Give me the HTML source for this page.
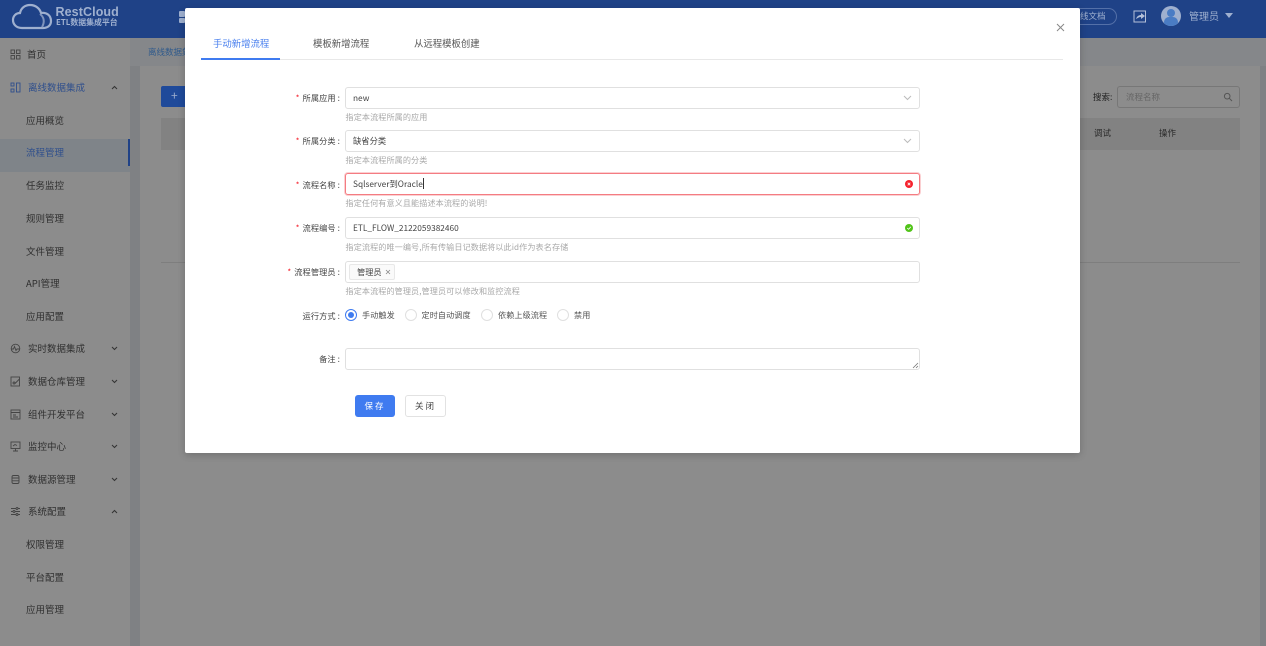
<!DOCTYPE html>
<html><head><meta charset="utf-8"><style>
*{box-sizing:border-box}
html,body{margin:0;padding:0;width:1266px;height:646px;overflow:hidden;background:#7f8184;font-family:"Noto Sans CJK SC","Liberation Sans",sans-serif;font-size:9.5px;color:#333}
#wrap{position:absolute;left:0;top:0;width:1266px;height:646px;filter:blur(.35px)}
.a{position:absolute;white-space:nowrap}
#hdr{left:0;top:0;width:1266px;height:38px;background:#1f4287}
#side{left:0;top:38px;width:130px;height:608px;background:#8c8c8c}
#main{left:140px;top:66px;width:1120px;height:580px;background:#8c8c8c}
.m{position:absolute;left:28px;font-size:9.5px;color:#2f2f2f;line-height:14px;letter-spacing:0;margin-top:-.5px}
.s{left:26px}
.ic{position:absolute;left:10px;width:11px;height:11px}
.ch{position:absolute;left:111px;width:7px;height:5px;margin-top:1px}
#dlg{left:185px;top:8px;width:895px;height:445px;background:#fff;border-radius:2px;box-shadow:0 2px 8px rgba(0,0,0,.2)}
.lab{position:absolute;right:740px;font-size:8.2px;color:#444;line-height:12px;letter-spacing:.1px}
.star{color:#f5222d;margin-right:3px}
.inp{position:absolute;left:160px;width:575px;height:22px;border:1px solid #e0e0e0;border-radius:3px;background:#fff;font-size:8.3px;color:#444;line-height:20px;padding-left:7px}
.hint{position:absolute;left:160.5px;font-size:8.1px;color:#a8a8a8;line-height:12px;letter-spacing:.1px;margin-top:.5px}
.rd{position:absolute;top:301px;width:12px;height:12px;border:1px solid #e0e0e0;border-radius:50%;background:#fff}
.rt{position:absolute;top:301px;font-size:8.1px;color:#555;line-height:13px;letter-spacing:.1px}
.tab{position:absolute;top:28px;font-size:9.4px;line-height:15px;color:#555;letter-spacing:0}
</style></head><body><div id="wrap">
<div class="a" id="hdr"></div>
<svg class="a" style="left:11px;top:2px" width="42" height="28" viewBox="0 0 42 28"><path d="M11 26C5 26 2 22 2 18C2 14 5 11 9 11C10 6 14 3 19 3C25 3 29 7 30 11C35 10 40 13 40 19C40 24 36 26 32 26Z" fill="none" stroke="#9fb0cf" stroke-width="2.2"/><path d="M29 12C33 15 34 20 31 25" fill="none" stroke="#7f94bd" stroke-width="2"/></svg>
<div class="a" style="left:55.5px;top:4px;font-family:'Liberation Sans',sans-serif;font-size:12.5px;font-weight:bold;color:#9fb0cf;line-height:16px;letter-spacing:.1px">RestCloud</div>
<div class="a" style="left:56px;top:17px;font-size:7.9px;font-weight:bold;color:#9fb0cf;line-height:11px;letter-spacing:0">ETL数据集成平台</div>
<div class="a" style="left:179px;top:11px;width:6px;height:6px;background:#9fb0cf;border-radius:1px"></div>
<div class="a" style="left:179px;top:18px;width:6px;height:5px;background:#9fb0cf;border-radius:1px"></div>
<div class="a" style="left:1060px;top:8px;width:57px;height:17px;border:1px solid #5470a8;border-radius:9px;border-left:0"></div>
<div class="a" style="left:1080px;top:10px;font-size:8.5px;color:#9fb0cf;line-height:12px">线文档</div>
<svg class="a" style="left:1133px;top:10px" width="14" height="13" viewBox="0 0 14 13"><rect x="1" y="1" width="11.5" height="11" fill="none" stroke="#b4c0d8" stroke-width="1"/><path d="M3 9C4 6 6 5 8 5V3L12 6L8 9V7C6 7 5 8 3 9Z" fill="#b4c0d8"/></svg>
<div class="a" style="left:1161px;top:6px;width:20px;height:20px;border-radius:50%;background:#9fb0cf;overflow:hidden"><div class="a" style="left:6px;top:3px;width:8px;height:8px;border-radius:50%;background:#4a7cc4"></div><div class="a" style="left:3px;top:11px;width:14px;height:10px;border-radius:7px;background:#4a7cc4"></div></div>
<div class="a" style="left:1189px;top:8px;font-size:10px;color:#9fb0cf;line-height:15px">管理员</div>
<div class="a" style="left:1225px;top:13px;width:0;height:0;border:4px solid transparent;border-top:5px solid #9fb0cf;border-bottom:0"></div>

<div class="a" id="side">
<div class="a" style="left:0;top:101px;width:130px;height:33px;background:#7f8489"></div>
<div class="a" style="left:128px;top:101px;width:2px;height:27px;background:#1f4287"></div>
<svg class="ic" style="top:11px" viewBox="0 0 11 11" fill="none" stroke="#444" stroke-width=".9"><rect x="1" y="1" width="3.5" height="3.5"/><rect x="6.5" y="1" width="3.5" height="3.5"/><rect x="1" y="6.5" width="3.5" height="3.5"/><rect x="6.5" y="6.5" width="3.5" height="3.5"/></svg>
<div class="m" style="top:9px;left:27px">首页</div>
<svg class="ic" style="top:44px" viewBox="0 0 11 11" fill="none" stroke="#2f4f8c" stroke-width=".9"><rect x="1" y="1" width="3" height="3"/><rect x="1" y="7" width="3" height="3"/><rect x="6.5" y="1" width="3.5" height="9"/></svg>
<div class="m" style="top:42px;color:#2f4f8c">离线数据集成</div>
<svg class="ch" style="top:46px" viewBox="0 0 7 5"><path d="M1 4L3.5 1.5L6 4" fill="none" stroke="#333" stroke-width="1"/></svg>
<div class="m s" style="top:75px">应用概览</div>
<div class="m s" style="top:107px;color:#2f4f8c">流程管理</div>
<div class="m s" style="top:140px">任务监控</div>
<div class="m s" style="top:173px">规则管理</div>
<div class="m s" style="top:206px">文件管理</div>
<div class="m s" style="top:238px">API管理</div>
<div class="m s" style="top:271px">应用配置</div>
<svg class="ic" style="top:305px" viewBox="0 0 11 11" fill="none" stroke="#444" stroke-width=".9"><circle cx="5.5" cy="5.5" r="4.3"/><path d="M1.5 6H3.5L4.5 3.5L6 7.5L7 6H9.5"/></svg>
<div class="m" style="top:303px">实时数据集成</div>
<svg class="ch" style="top:307px" viewBox="0 0 7 5"><path d="M1 1L3.5 3.5L6 1" fill="none" stroke="#333" stroke-width="1"/></svg>
<svg class="ic" style="top:338px" viewBox="0 0 11 11" fill="none" stroke="#444" stroke-width=".9"><rect x="1" y="1" width="8.5" height="9"/><path d="M5 7.5L9.5 3"/><circle cx="4" cy="7" r="1"/></svg>
<div class="m" style="top:336px">数据仓库管理</div>
<svg class="ch" style="top:340px" viewBox="0 0 7 5"><path d="M1 1L3.5 3.5L6 1" fill="none" stroke="#333" stroke-width="1"/></svg>
<svg class="ic" style="top:371px" viewBox="0 0 11 11" fill="none" stroke="#444" stroke-width=".9"><rect x="1" y="1" width="9" height="9"/><path d="M1 3.5H10M3 6H6M3 8H8"/></svg>
<div class="m" style="top:369px">组件开发平台</div>
<svg class="ch" style="top:373px" viewBox="0 0 7 5"><path d="M1 1L3.5 3.5L6 1" fill="none" stroke="#333" stroke-width="1"/></svg>
<svg class="ic" style="top:403px" viewBox="0 0 11 11" fill="none" stroke="#444" stroke-width=".9"><rect x="1" y="1" width="9" height="6.5"/><path d="M5.5 7.5V9.5M3 10H8M3 5L5 3.5L7 4.5"/></svg>
<div class="m" style="top:401px">监控中心</div>
<svg class="ch" style="top:405px" viewBox="0 0 7 5"><path d="M1 1L3.5 3.5L6 1" fill="none" stroke="#333" stroke-width="1"/></svg>
<svg class="ic" style="top:436px" viewBox="0 0 11 11" fill="none" stroke="#444" stroke-width=".9"><rect x="2" y="1.5" width="7" height="8" rx="1.5"/><path d="M2 4H9M2 6.8H9"/></svg>
<div class="m" style="top:434px">数据源管理</div>
<svg class="ch" style="top:438px" viewBox="0 0 7 5"><path d="M1 1L3.5 3.5L6 1" fill="none" stroke="#333" stroke-width="1"/></svg>
<svg class="ic" style="top:468px" viewBox="0 0 11 11" fill="none" stroke="#444" stroke-width=".9"><path d="M1 2.5H10M1 5.5H10M1 8.5H10"/><circle cx="7" cy="2.5" r="1" fill="#8c8c8c"/><circle cx="4" cy="5.5" r="1" fill="#8c8c8c"/><circle cx="7" cy="8.5" r="1" fill="#8c8c8c"/></svg>
<div class="m" style="top:466px">系统配置</div>
<svg class="ch" style="top:470px" viewBox="0 0 7 5"><path d="M1 4L3.5 1.5L6 4" fill="none" stroke="#333" stroke-width="1"/></svg>
<div class="m s" style="top:499px">权限管理</div>
<div class="m s" style="top:532px">平台配置</div>
<div class="m s" style="top:564px">应用管理</div>
</div>

<div class="a" style="left:130px;top:38px;width:1136px;height:28px;background:#85878a"></div>
<div class="a" style="left:148px;top:46px;font-size:8.5px;color:#2f5a8c;line-height:12px">离线数据集</div>
<div class="a" id="main"></div>
<div class="a" style="left:161px;top:86px;width:30px;height:21px;background:#1f4a9a;border-radius:2px;color:#9fb0cf;font-size:12px;line-height:20px;padding-left:10px">+</div>
<div class="a" style="left:161px;top:118px;width:1079px;height:32px;background:#828282"></div>
<div class="a" style="left:161px;top:262px;width:1079px;height:1px;background:#7e7e7e"></div>
<div class="a" style="left:1093px;top:91px;font-size:8.5px;color:#222;line-height:12px">搜索:</div>
<div class="a" style="left:1117px;top:86px;width:123px;height:22px;border:1px solid #777;border-radius:3px;background:#8c8c8c"></div>
<div class="a" style="left:1126px;top:91px;font-size:8.5px;color:#666;line-height:12px">流程名称</div>
<svg class="a" style="left:1223px;top:92px" width="10" height="10" viewBox="0 0 10 10"><circle cx="4.2" cy="4.2" r="2.8" fill="none" stroke="#555" stroke-width="1"/><path d="M6.3 6.3L9 9" stroke="#555" stroke-width="1"/></svg>
<div class="a" style="left:1094px;top:127px;font-size:8.5px;color:#2a2a2a;line-height:13px">调试</div>
<div class="a" style="left:1159px;top:127px;font-size:8.5px;color:#2a2a2a;line-height:13px">操作</div>

<div class="a" id="dlg">
<div class="tab" style="left:28px;color:#4a80ee">手动新增流程</div>
<div class="tab" style="left:128px">模板新增流程</div>
<div class="tab" style="left:229px">从远程模板创建</div>
<div class="a" style="left:16px;top:51px;width:862px;height:1px;background:#e8e8e8"></div>
<div class="a" style="left:16px;top:50px;width:79px;height:2px;background:#3f7bf0"></div>
<svg class="a" style="left:871px;top:15px" width="9" height="9" viewBox="0 0 9 9"><path d="M1 1L8 8M8 1L1 8" stroke="#888" stroke-width="1"/></svg>

<div class="lab" style="top:84px"><span class="star">*</span>所属应用 :</div>
<div class="inp" style="top:79px">new</div>
<svg class="a" style="left:718px;top:87px" width="9" height="6" viewBox="0 0 9 6"><path d="M1 1L4.5 4.5L8 1" fill="none" stroke="#bbb" stroke-width="1"/></svg>
<div class="hint" style="top:103px">指定本流程所属的应用</div>

<div class="lab" style="top:127px"><span class="star">*</span>所属分类 :</div>
<div class="inp" style="top:122px">缺省分类</div>
<svg class="a" style="left:718px;top:130px" width="9" height="6" viewBox="0 0 9 6"><path d="M1 1L4.5 4.5L8 1" fill="none" stroke="#bbb" stroke-width="1"/></svg>
<div class="hint" style="top:146px">指定本流程所属的分类</div>

<div class="lab" style="top:171px"><span class="star">*</span>流程名称 :</div>
<div class="inp" style="top:165px;height:22px;border-color:#f47c82;box-shadow:0 0 0 1px #fbd0d2">Sqlserver到Oracle<span style="display:inline-block;width:1px;height:11px;background:#333;vertical-align:-2px"></span></div>
<div class="a" style="left:720px;top:172px;width:8px;height:8px;border-radius:50%;background:#f5222d"></div>
<svg class="a" style="left:720px;top:172px" width="8" height="8" viewBox="0 0 8 8"><path d="M2.7 2.7L5.3 5.3M5.3 2.7L2.7 5.3" stroke="#fff" stroke-width=".8"/></svg>
<div class="hint" style="top:189px">指定任何有意义且能描述本流程的说明!</div>

<div class="lab" style="top:214px"><span class="star">*</span>流程编号 :</div>
<div class="inp" style="top:209px">ETL_FLOW_2122059382460</div>
<div class="a" style="left:720px;top:216px;width:8px;height:8px;border-radius:50%;background:#52c41a"></div>
<svg class="a" style="left:720px;top:216px" width="8" height="8" viewBox="0 0 8 8"><path d="M2.2 4L3.6 5.3L5.8 2.8" fill="none" stroke="#fff" stroke-width=".8"/></svg>
<div class="hint" style="top:233px">指定流程的唯一编号,所有传输日记数据将以此id作为表名存储</div>

<div class="lab" style="top:258px"><span class="star">*</span>流程管理员 :</div>
<div class="inp" style="top:253px"></div>
<div class="a" style="left:164px;top:256px;width:46px;height:16px;background:#fafafa;border:1px solid #e8e8e8;border-radius:2px;font-size:8.2px;line-height:14px;padding-left:7px;color:#444">管理员</div>
<svg class="a" style="left:200px;top:261px" width="6" height="6" viewBox="0 0 6 6"><path d="M1 1L5 5M5 1L1 5" stroke="#888" stroke-width=".8"/></svg>
<div class="hint" style="top:277px">指定本流程的管理员,管理员可以修改和监控流程</div>

<div class="lab" style="top:302px">运行方式 :</div>
<div class="rd" style="left:160px;border-color:#3f7bf0"></div>
<div class="a" style="left:163px;top:304px;width:6px;height:6px;border-radius:50%;background:#3f7bf0"></div>
<div class="rt" style="left:177px">手动触发</div>
<div class="rd" style="left:220px"></div>
<div class="rt" style="left:236.5px">定时自动调度</div>
<div class="rd" style="left:296px"></div>
<div class="rt" style="left:313px">依赖上级流程</div>
<div class="rd" style="left:372px"></div>
<div class="rt" style="left:389px">禁用</div>

<div class="lab" style="top:345px">备注 :</div>
<div class="inp" style="top:340px"></div>
<svg class="a" style="left:727px;top:354px" width="7" height="7" viewBox="0 0 7 7"><path d="M1 6L6 1M4 6L6 4" stroke="#777" stroke-width=".8"/></svg>

<div class="a" style="left:170px;top:387px;width:40px;height:22px;background:#3f7bf0;border-radius:3px;color:#fff;font-size:8.5px;line-height:22px;text-align:center;letter-spacing:2px">保存</div>
<div class="a" style="left:220px;top:387px;width:41px;height:22px;background:#fff;border:1px solid #e2e2e2;border-radius:3px;color:#444;font-size:8.5px;line-height:20px;text-align:center;letter-spacing:2px">关闭</div>
</div>
</div></body></html>
